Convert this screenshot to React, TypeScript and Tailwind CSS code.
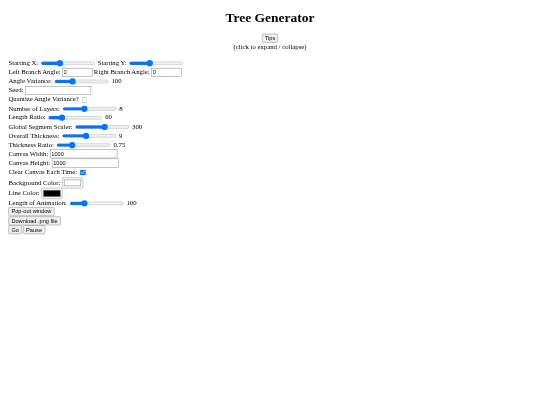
import type { ReactNode } from "react";

function Slider({ value }: { value: number }) {
  return <input type="range" min={0} max={100} defaultValue={value} className="mx-[2px] w-[129px] align-middle" />;
}

function Text({ w, value }: { w: number; value?: string }) {
  return (
    <input
      type="text"
      defaultValue={value}
      style={{ width: w }}
      className="h-[21px] border border-[#767676] bg-white px-[2px] align-baseline font-['Liberation_Sans',sans-serif] text-[13.33px]"
    />
  );
}

function Btn({ children }: { children: string }) {
  return (
    <button className="h-[21px] rounded-[3px] border border-[#767676] bg-[#efefef] px-[6px] align-baseline font-['Liberation_Sans',sans-serif] text-[13.33px] leading-[17px] text-black">
      {children}
    </button>
  );
}

function Swatch({ value }: { value: string }) {
  return (
    <input
      type="color"
      defaultValue={value}
      className="h-[27px] w-[50px] rounded-[3px] border border-[#a0a0a0] bg-[#efefef] px-[2px] py-[1px] align-middle"
    />
  );
}

function Row({ children }: { children: ReactNode }) {
  return <div className="h-[21.5px] whitespace-nowrap leading-[21.5px]">{children}</div>;
}

function ColorRow({ children }: { children: ReactNode }) {
  return <div className="h-[25px] whitespace-nowrap leading-[25px]">{children}</div>;
}

export default function App() {
  return (
    <div className="h-[405px] w-[540px] overflow-hidden bg-white">
      {/* the page is a 1280x960 capture shrunk to fit */}
      <div className="h-[960px] w-[1280px] origin-top-left scale-[0.421875] px-[20px] font-['Liberation_Serif',serif] text-[16px] leading-[18px] text-black blur-[0.6px]">
        <h1 className="pt-[22px] text-center text-[32px] font-bold leading-[37px]">Tree Generator</h1>
        <div className="mt-[21px] text-center">
          <Btn>Tips</Btn>
          <div>(click to expand / collapse)</div>
        </div>
        <div className="mt-[19px]">
          <Row>Starting X: <Slider value={33} /> Starting Y: <Slider value={36} /></Row>
          <Row>Left Branch Angle: <Text w={71} value="0" /> Right Branch Angle: <Text w={71} value="0" /></Row>
          <Row>Angle Variance: <Slider value={31} /> 100</Row>
          <Row>Seed: <Text w={156} /></Row>
          <Row>Quantize Angle Variance? <input type="checkbox" className="mx-[3px] align-middle" /></Row>
          <Row>Number of Layers: <Slider value={39} /> 8</Row>
          <Row>Length Ratio: <Slider value={22} /> 60</Row>
          <Row>Global Segment Scaler: <Slider value={55} /> 300</Row>
          <Row>Overall Thickness: <Slider value={43} /> 9</Row>
          <Row>Thickness Ratio: <Slider value={26} /> 0.75</Row>
          <Row>Canvas Width: <Text w={159} value="1000" /></Row>
          <Row>Canvas Height: <Text w={159} value="1000" /></Row>
          <Row>Clear Canvas Each Time: <input type="checkbox" defaultChecked className="mx-[3px] align-middle" /></Row>
          <div className="mt-[2px]">
            <ColorRow>Background Color: <Swatch value="#ffffff" /></ColorRow>
            <ColorRow>Line Color: <Swatch value="#000000" /></ColorRow>
          </div>
          <Row>Length of Animation: <Slider value={24} /> 100</Row>
          <div className="h-[21.5px]"><Btn>Pop-out window</Btn></div>
          <div className="h-[21.5px]"><Btn>Download .png file</Btn></div>
          <div className="flex h-[21.5px] gap-[3px]"><Btn>Go</Btn><Btn>Pause</Btn></div>
        </div>
      </div>
    </div>
  );
}
